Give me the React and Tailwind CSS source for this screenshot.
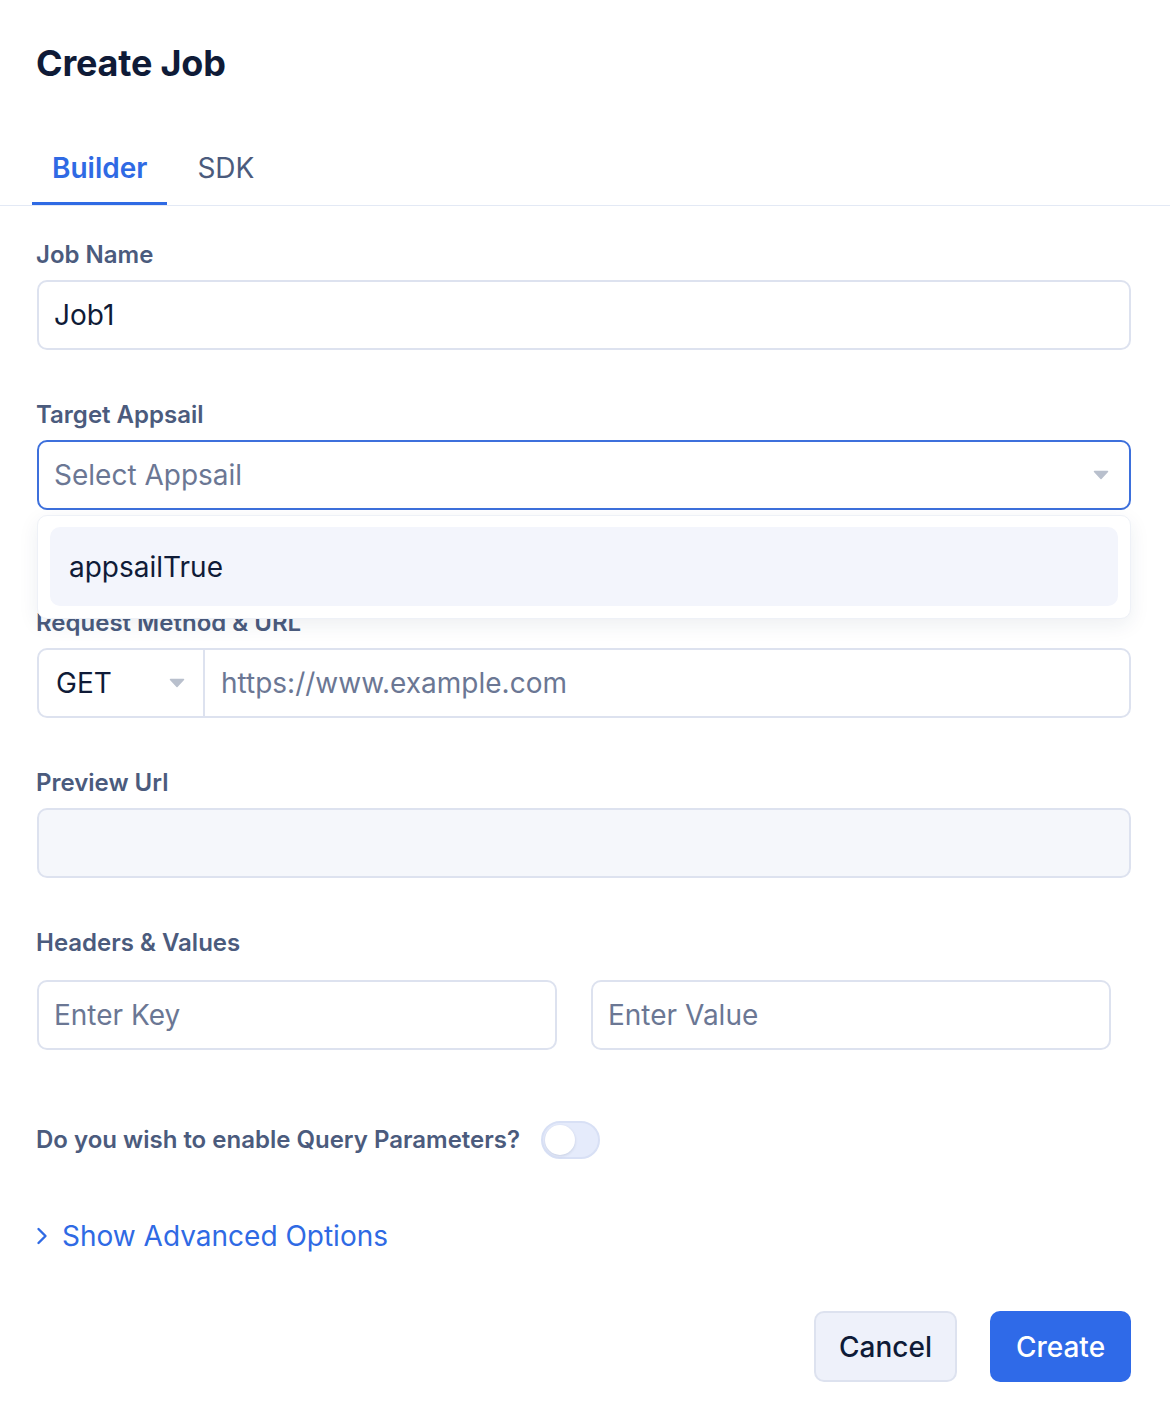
import { useState } from "react";

const font = { fontFamily: "Inter, 'Noto Sans', sans-serif" };

const Caret = ({ className }) => (
  <svg className={className} width="16" height="10" viewBox="0 0 16 10">
    <path d="M1.5 1.5h13L8 8.5z" fill="#b9c0cd" stroke="#b9c0cd" strokeWidth="1.5" strokeLinejoin="round" />
  </svg>
);

const Label = ({ children, className = "" }) => (
  <div className={`text-[24px] leading-[30px] font-semibold text-[#4b5b7d] ${className}`}>{children}</div>
);

const App = () => {
  const [tab, setTab] = useState("builder");
  const [query, setQuery] = useState(false);

  return (
    <div style={font} className="w-[1170px] min-h-[1416px] bg-white text-[#0f1b37] antialiased">
      {/* Title */}
      <div className="px-[36px] pt-[41px]">
        <h1 className="text-[36px] leading-[44px] font-bold tracking-[-0.2px]">Create Job</h1>
      </div>

      {/* Tabs */}
      <div className="mt-[45px] flex gap-[10px] pl-[32px] border-b border-[#e3e9f5]">
        <button
          onClick={() => setTab("builder")}
          className={`px-[20px] pt-[21px] pb-[17px] text-[28px] leading-[34px] border-b-[3px] ${
            tab === "builder" ? "font-semibold text-[#2f6ae4] border-[#2f6ae4]" : "text-[#4b5b7d] border-transparent"
          }`}
        >
          Builder
        </button>
        <button
          onClick={() => setTab("sdk")}
          className={`px-[20px] pt-[21px] pb-[17px] text-[28px] leading-[34px] border-b-[3px] ${
            tab === "sdk" ? "font-semibold text-[#2f6ae4] border-[#2f6ae4]" : "text-[#4b5b7d] border-transparent"
          }`}
        >
          SDK
        </button>
      </div>

      {/* Form */}
      <div className="pl-[37px] pr-[39px]">
        <Label className="mt-[34px] -ml-px">Job Name</Label>
        <div className="mt-[10px] h-[70px] rounded-[10px] border-2 border-[#dde2ef] flex items-center px-[15px] text-[28px]">
          Job1
        </div>

        <Label className="mt-[50px] -ml-px">Target Appsail</Label>
        <div className="relative mt-[10px]">
          <div className="h-[70px] rounded-[10px] border-2 border-[#3d70dc] flex items-center justify-between px-[15px] pr-[20px]">
            <span className="text-[28px] text-[#6b7794]">Select Appsail</span>
            <Caret />
          </div>
          <div className="absolute z-10 left-0 right-0 top-[75px] rounded-[10px] bg-white border border-[#eef1f7] shadow-[0_6px_20px_rgba(30,50,90,0.08)] px-[12px] pt-[11px] pb-[12px]">
            <div className="h-[79px] rounded-[10px] bg-[#f3f5fc] flex items-center px-[19px] text-[28px]">appsailTrue</div>
          </div>
        </div>

        <Label className="mt-[98px] -ml-px">Request Method &amp; URL</Label>
        <div className="mt-[10px] h-[70px] rounded-[10px] border-2 border-[#dde2ef] flex">
          <div className="w-[166px] flex items-center justify-between pl-[17px] pr-[18px] border-r-2 border-[#dde2ef] text-[28px]">
            GET
            <Caret />
          </div>
          <div className="flex-1 flex items-center px-[16px] text-[28px] text-[#6b7794]">https://www.example.com</div>
        </div>

        <Label className="mt-[50px] -ml-px">Preview Url</Label>
        <div className="mt-[10px] h-[70px] rounded-[10px] border-2 border-[#dde2ef] bg-[#f5f7fb]" />

        <Label className="mt-[50px] -ml-px">Headers &amp; Values</Label>
        <div className="mt-[22px] flex gap-[34px] pr-[20px]">
          <div className="flex-1 h-[70px] rounded-[10px] border-2 border-[#dde2ef] flex items-center px-[15px] text-[28px] text-[#6b7794]">
            Enter Key
          </div>
          <div className="flex-1 h-[70px] rounded-[10px] border-2 border-[#dde2ef] flex items-center px-[15px] text-[28px] text-[#6b7794]">
            Enter Value
          </div>
        </div>

        <div className="mt-[71px] flex items-center gap-[21px] -ml-px">
          <Label>Do you wish to enable Query Parameters?</Label>
          <button
            onClick={() => setQuery(!query)}
            className={`w-[59px] h-[38px] rounded-full border-2 flex items-center px-[2px] ${
              query ? "bg-[#2f6ae4] border-[#2f6ae4] justify-end" : "bg-[#e5ebfb] border-[#d8e0f5] justify-start"
            }`}
          >
            <span className="w-[30px] h-[30px] rounded-full bg-white shadow-[0_1px_3px_rgba(30,50,90,0.15)]" />
          </button>
        </div>

        <button className="mt-[62px] flex items-center gap-[14px] text-[#2f6ae4] text-[28px] leading-[30px] -ml-px">
          <svg width="12" height="20" viewBox="0 0 12 20" fill="none">
            <path d="M2.5 3l7 7-7 7" stroke="#2f6ae4" strokeWidth="2.4" strokeLinecap="round" strokeLinejoin="round" />
          </svg>
          Show Advanced Options
        </button>

        <div className="mt-[60px] flex justify-end gap-[33px]">
          <button className="w-[143px] h-[71px] rounded-[10px] bg-[#eef1fa] border-2 border-[#dde2ef] text-[28px] font-medium text-[#0f1b37]">
            Cancel
          </button>
          <button className="w-[141px] h-[71px] rounded-[10px] bg-[#2f6ae8] text-[28px] font-medium text-white">
            Create
          </button>
        </div>
      </div>
    </div>
  );
};

export default App;
